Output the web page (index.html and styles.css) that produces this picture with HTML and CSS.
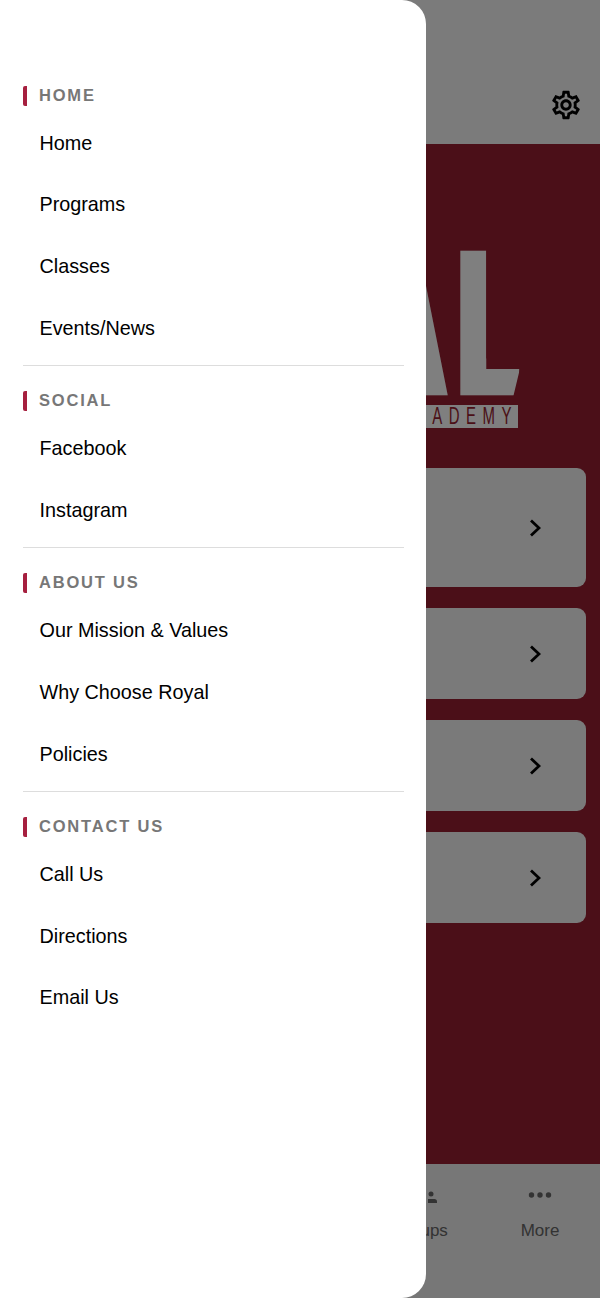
FILE: index.html
```html
<!DOCTYPE html>
<html lang="en">

<head>
    <meta charset="UTF-8">
    <meta name="viewport" content="width=device-width, initial-scale=1.0">
    <title>Royal Academy</title>
    <link rel="stylesheet" href="styles.css">
</head>

<body>
    <div class="app">
        <header class="top-bar">
            <svg class="gear" viewBox="0 0 24 24">
                <path d="M19.43 12.98c.04-.32.07-.64.07-.98 0-.34-.03-.66-.07-.98l2.11-1.65c.19-.15.24-.42.12-.64l-2-3.46c-.09-.16-.26-.25-.44-.25-.06 0-.12.01-.17.03l-2.49 1c-.52-.4-1.08-.73-1.69-.98l-.38-2.65C14.46 2.18 14.25 2 14 2h-4c-.25 0-.46.18-.49.42l-.38 2.65c-.61.25-1.17.59-1.69.98l-2.49-1c-.06-.02-.12-.03-.18-.03-.17 0-.34.09-.43.25l-2 3.46c-.13.22-.07.49.12.64l2.11 1.65c-.04.32-.07.65-.07.98 0 .33.03.66.07.98l-2.11 1.65c-.19.15-.24.42-.12.64l2 3.46c.09.16.26.25.44.25.06 0 .12-.01.17-.03l2.49-1c.52.4 1.08.73 1.69.98l.38 2.65c.03.24.24.42.49.42h4c.25 0 .46-.18.49-.42l.38-2.65c.61-.25 1.17-.59 1.69-.98l2.49 1c.06.02.12.03.18.03.17 0 .34-.09.43-.25l2-3.46c.12-.22.07-.49-.12-.64l-2.11-1.65zm-1.98-1.71c.04.31.05.52.05.73 0 .21-.02.43-.05.73l-.14 1.13.89.7 1.08.84-.7 1.21-1.27-.51-1.04-.42-.9.68c-.43.32-.84.56-1.25.73l-1.06.43-.16 1.13-.2 1.35h-1.4l-.19-1.35-.16-1.13-1.06-.43c-.43-.18-.83-.41-1.23-.71l-.91-.7-1.06.43-1.27.51-.7-1.21 1.08-.84.89-.7-.14-1.13c-.03-.31-.05-.54-.05-.74s.02-.43.05-.73l.14-1.13-.89-.7-1.08-.84.7-1.21 1.27.51 1.04.42.9-.68c.43-.32.84-.56 1.25-.73l1.06-.43.16-1.13.2-1.35h1.39l.19 1.35.16 1.13 1.06.43c.43.18.83.41 1.23.71l.91.7 1.06-.43 1.27-.51.7 1.21-1.07.85-.89.7.14 1.13zM12 8c-2.21 0-4 1.79-4 4s1.79 4 4 4 4-1.79 4-4-1.79-4-4-4zm0 6c-1.1 0-2-.9-2-2s.9-2 2-2 2 .9 2 2-.9 2-2 2z" />
            </svg>
        </header>

        <main class="content">
            <div class="logo">
                <div class="logo-name"><span class="logo-gap">A</span>L</div>
                <div class="logo-band"><span>ACADEMY</span></div>
            </div>

            <div class="card card-tall">
                <svg class="chevron" viewBox="0 0 12 18"><path d="M2 1.500l8 7.500-8 7.500" /></svg>
            </div>
            <div class="card">
                <svg class="chevron" viewBox="0 0 12 18"><path d="M2 1.500l8 7.500-8 7.500" /></svg>
            </div>
            <div class="card">
                <svg class="chevron" viewBox="0 0 12 18"><path d="M2 1.500l8 7.500-8 7.500" /></svg>
            </div>
            <div class="card">
                <svg class="chevron" viewBox="0 0 12 18"><path d="M2 1.500l8 7.500-8 7.500" /></svg>
            </div>
        </main>

        <nav class="tab-bar">
            <div class="tab"></div>
            <div class="tab"></div>
            <div class="tab"></div>
            <div class="tab">
                <svg class="tab-icon" viewBox="0 0 34 20">
                    <circle cx="17" cy="6" r="3" />
                    <path d="M11 16v-3c0-1.500 1-2.500 2.500-2.500h7c1.500 0 2.500 1 2.500 2.500v3z" />
                    <circle cx="28" cy="7" r="2.500" />
                    <path d="M25 16v-4h6.500c1.500 0 2.500 1 2.500 2.500V16z" />
                    <circle cx="6" cy="7" r="2.500" />
                    <path d="M9 16v-4H2.500C1 12 0 13 0 14.500V16z" />
                </svg>
                <span>Groups</span>
            </div>
            <div class="tab">
                <svg class="tab-icon" viewBox="0 0 34 20">
                    <circle cx="8.500" cy="8" r="2.700" />
                    <circle cx="17" cy="8" r="2.700" />
                    <circle cx="25.500" cy="8" r="2.700" />
                </svg>
                <span>More</span>
            </div>
        </nav>
    </div>

    <div class="scrim"></div>

    <!-- side menu, open over the home screen -->
    <aside class="drawer">
        <section class="menu-group">
            <h3 class="menu-title">HOME</h3>
            <a class="menu-item" href="#">Home</a>
            <a class="menu-item" href="#">Programs</a>
            <a class="menu-item" href="#">Classes</a>
            <a class="menu-item" href="#">Events/News</a>
        </section>
        <section class="menu-group">
            <h3 class="menu-title">SOCIAL</h3>
            <a class="menu-item" href="#">Facebook</a>
            <a class="menu-item" href="#">Instagram</a>
        </section>
        <section class="menu-group">
            <h3 class="menu-title">ABOUT US</h3>
            <a class="menu-item" href="#">Our Mission &amp; Values</a>
            <a class="menu-item" href="#">Why Choose Royal</a>
            <a class="menu-item" href="#">Policies</a>
        </section>
        <section class="menu-group">
            <h3 class="menu-title">CONTACT US</h3>
            <a class="menu-item" href="#">Call Us</a>
            <a class="menu-item" href="#">Directions</a>
            <a class="menu-item" href="#">Email Us</a>
        </section>
    </aside>
</body>

</html>
```

FILE: styles.css
```css
* {
    box-sizing: border-box;
}

body {
    margin: 0;
    width: 600px;
    height: 1298px;
    position: relative;
    overflow: hidden;
    font-family: "Liberation Sans", Arial, sans-serif;
}

.app {
    display: flex;
    flex-direction: column;
    height: 100%;
}

/* Home screen under the menu */
.top-bar {
    height: 144px;
    flex-shrink: 0;
    display: flex;
    justify-content: flex-end;
    background-color: #f6f6f6;
    padding: 88px 17px 0 0;
}

.gear {
    width: 34px;
    height: 34px;
    fill: #000;
}

.content {
    flex: 1;
    display: flex;
    flex-direction: column;
    align-items: flex-end;
    background-color: #961e30;
    padding: 0 14px 0 0;
    overflow: hidden;
}

.logo {
    display: flex;
    flex-direction: column;
    align-items: flex-end;
    margin: 104px 68px 40px 0;
    color: #fff;
}

.logo-name {
    margin-right: -2px;
    font-family: Inter, "Liberation Sans", sans-serif;
    font-weight: 900;
    font-size: 190px;
    line-height: 150px;
    height: 150px;
    white-space: nowrap;
    -webkit-text-stroke: 6.4px #fff;
    transform: scaleX(0.59);
    transform-origin: right center;
    /* trims the foot of the L and slants its end */
    clip-path: polygon(-600px -50px, calc(100% - 58px) -50px, calc(100% - 58px) 121px, calc(100% - 1px) 121px, calc(100% - 12px) 148px, -600px 148px);
}

.logo-gap {
    letter-spacing: 16px;
}

.logo-band {
    margin-top: 7px;
    width: 240px;
    height: 23px;
    background-color: #fff;
    color: #961e30;
    font-size: 23px;
    line-height: 23px;
    letter-spacing: 10px;
    text-align: right;
}

.logo-band span {
    display: block;
    white-space: nowrap;
    transform: scaleX(0.65);
    transform-origin: right center;
}

.card {
    width: 400px;
    height: 91px;
    flex-shrink: 0;
    margin-bottom: 21px;
    display: flex;
    align-items: center;
    justify-content: flex-end;
    padding-right: 45px;
    background-color: #f4f4f4;
    border-radius: 9px;
}

.card-tall {
    height: 119px;
}

.chevron {
    width: 12px;
    height: 18px;
    fill: none;
    stroke: #000;
    stroke-width: 2.8;
}

.tab-bar {
    height: 134px;
    flex-shrink: 0;
    display: flex;
    background-color: #eeeeee;
}

.tab {
    width: 120px;
    display: flex;
    flex-direction: column;
    align-items: center;
    padding-top: 23px;
    color: #666;
    font-size: 17px;
    fill: #666;
}

.tab-icon {
    width: 34px;
    height: 20px;
    margin-bottom: 14px;
}

.scrim {
    position: absolute;
    inset: 0;
    background-color: rgba(0, 0, 0, 0.5);
}

/* Side menu */
.drawer {
    position: absolute;
    top: 0;
    left: 0;
    bottom: 0;
    width: 426px;
    padding: 85.5px 22px 0 23px;
    background-color: #fff;
    border-radius: 0 24px 24px 0;
}

.menu-group {
    display: flex;
    flex-direction: column;
    margin-bottom: 25px;
    padding-bottom: 6px;
    border-bottom: 1px solid #dddddd;
}

.menu-group:last-child {
    border-bottom: none;
}

.menu-title {
    margin: 0 0 7px;
    height: 20px;
    padding-left: 12px;
    border-left: 4px solid #a6203f;
    border-radius: 2px;
    color: #777;
    font-size: 16.5px;
    font-weight: bold;
    line-height: 19px;
    letter-spacing: 1.8px;
}

.menu-item {
    height: 61.6px;
    display: flex;
    align-items: center;
    padding-left: 16.5px;
    color: #000;
    font-size: 19.8px;
    text-decoration: none;
}
```
